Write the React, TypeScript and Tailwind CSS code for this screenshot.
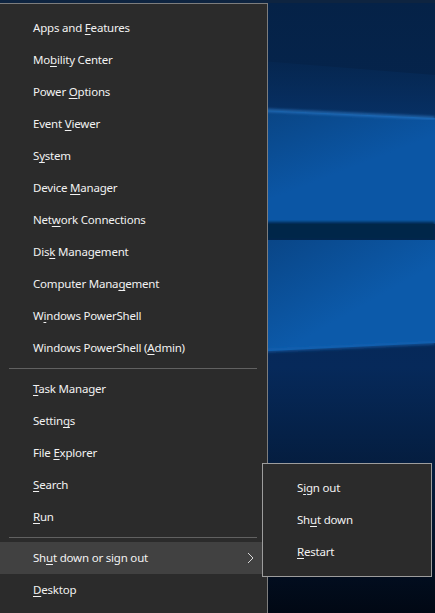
import React from 'react'

type Item = { pre: string; key: string; post: string; sub?: boolean; active?: boolean }

const GROUP_A: Item[] = [
  { pre: 'Apps and ', key: 'F', post: 'eatures' },
  { pre: 'Mo', key: 'b', post: 'ility Center' },
  { pre: 'Power ', key: 'O', post: 'ptions' },
  { pre: 'Event ', key: 'V', post: 'iewer' },
  { pre: 'S', key: 'y', post: 'stem' },
  { pre: 'Device ', key: 'M', post: 'anager' },
  { pre: 'Net', key: 'w', post: 'ork Connections' },
  { pre: 'Dis', key: 'k', post: ' Management' },
  { pre: 'Computer Mana', key: 'g', post: 'ement' },
  { pre: 'W', key: 'i', post: 'ndows PowerShell' },
  { pre: 'Windows PowerShell (', key: 'A', post: 'dmin)' },
]

const GROUP_B: Item[] = [
  { pre: '', key: 'T', post: 'ask Manager' },
  { pre: 'Settin', key: 'g', post: 's' },
  { pre: 'File ', key: 'E', post: 'xplorer' },
  { pre: '', key: 'S', post: 'earch' },
  { pre: '', key: 'R', post: 'un' },
]

const GROUP_C: Item[] = [
  { pre: 'Sh', key: 'u', post: 't down or sign out', sub: true, active: true },
  { pre: '', key: 'D', post: 'esktop' },
]

const FLYOUT: Item[] = [
  { pre: 'S', key: 'i', post: 'gn out' },
  { pre: 'Sh', key: 'u', post: 't down' },
  { pre: '', key: 'R', post: 'estart' },
]

function Label({ item }: { item: Item }) {
  return (
    <span className="whitespace-pre">
      {item.pre}
      <u className="underline decoration-1 underline-offset-2">{item.key}</u>
      {item.post}
    </span>
  )
}

function Row({ item }: { item: Item }) {
  return (
    <div
      className={
        'flex items-center h-8 pl-[33px] pr-3 ' + (item.active ? 'bg-[#414141]' : '')
      }
    >
      <div className="flex-1">
        <Label item={item} />
      </div>
      {item.sub && (
        <svg width="7" height="12" viewBox="0 0 7 12" className="mr-[1px]">
          <path d="M1 1 L6 6 L1 11" fill="none" stroke="#d8d8d8" strokeWidth="1" />
        </svg>
      )}
    </div>
  )
}

function Separator() {
  return (
    <div className="py-1 pl-[9px] pr-[10px]">
      <div className="h-px bg-[#616161]" />
    </div>
  )
}

function Wallpaper() {
  return (
    <svg
      className="absolute inset-0 w-full h-full"
      viewBox="0 0 435 613"
      preserveAspectRatio="none"
    >
      <defs>
        <linearGradient id="base" x1="0" y1="0" x2="0" y2="1">
          <stop offset="0" stopColor="#052247" />
          <stop offset="0.6" stopColor="#06295a" />
          <stop offset="0.8" stopColor="#041a38" />
          <stop offset="1" stopColor="#010814" />
        </linearGradient>
        <linearGradient id="up" x1="0.6" y1="0" x2="1" y2="0.3">
          <stop offset="0" stopColor="#09427f" />
          <stop offset="1" stopColor="#0b56a5" />
        </linearGradient>
        <linearGradient id="low" x1="0.6" y1="0" x2="1" y2="0.2">
          <stop offset="0" stopColor="#094586" />
          <stop offset="1" stopColor="#0c5aaa" />
        </linearGradient>
        <linearGradient id="haze" x1="0" y1="0" x2="0" y2="1">
          <stop offset="0" stopColor="#052247" />
          <stop offset="1" stopColor="#07336a" />
        </linearGradient>
        <filter id="soft">
          <feGaussianBlur stdDeviation="1.5" />
        </filter>
      </defs>
      <rect x="0" y="0" width="435" height="613" fill="url(#base)" />
      <polygon points="0,40 435,75 435,118 0,98" fill="url(#haze)" opacity="0.8" />
      <polygon points="0,98 435,118 435,224 0,224" fill="url(#up)" />
      <rect x="0" y="222" width="435" height="18" fill="#06264a" filter="url(#soft)" />
      <polygon points="0,240 435,240 435,343 0,364" fill="url(#low)" />
      <line x1="0" y1="98" x2="435" y2="118" stroke="#2f80d2" strokeWidth="2" filter="url(#soft)" />
      <line x1="0" y1="363" x2="435" y2="343" stroke="#1865b4" strokeWidth="2" filter="url(#soft)" />
      <rect x="0" y="0" width="435" height="3" fill="#0e2440" />
    </svg>
  )
}

export default function App() {
  return (
    <div
      className="relative w-[435px] h-[613px] overflow-hidden text-[11.5px] tracking-[-0.2px] text-[#f2f2f2]"
      style={{ fontFamily: '"Noto Sans", "Open Sans", sans-serif' }}
    >
      <Wallpaper />

      <div className="relative pt-[3px] h-full">
        {/* Main Win+X menu */}
        <div className="w-[268px] h-full bg-[#2b2b2b] border-t border-r border-[#7d7d7d] pt-2">
          {GROUP_A.map(i => <Row key={i.pre + i.key} item={i} />)}
          <Separator />
          {GROUP_B.map(i => <Row key={i.pre + i.key} item={i} />)}
          <Separator />
          {GROUP_C.map(i => <Row key={i.pre + i.key} item={i} />)}
        </div>
      </div>

      {/* Flyout */}
      <div className="absolute left-[262px] top-[463px] w-[170px] h-[114px] bg-[#2b2b2b] border border-[#9d9d9d] py-2">
        {FLYOUT.map(i => (
          <div key={i.pre + i.key} className="flex items-center h-8 pl-[34px]">
            <Label item={i} />
          </div>
        ))}
      </div>
    </div>
  )
}
